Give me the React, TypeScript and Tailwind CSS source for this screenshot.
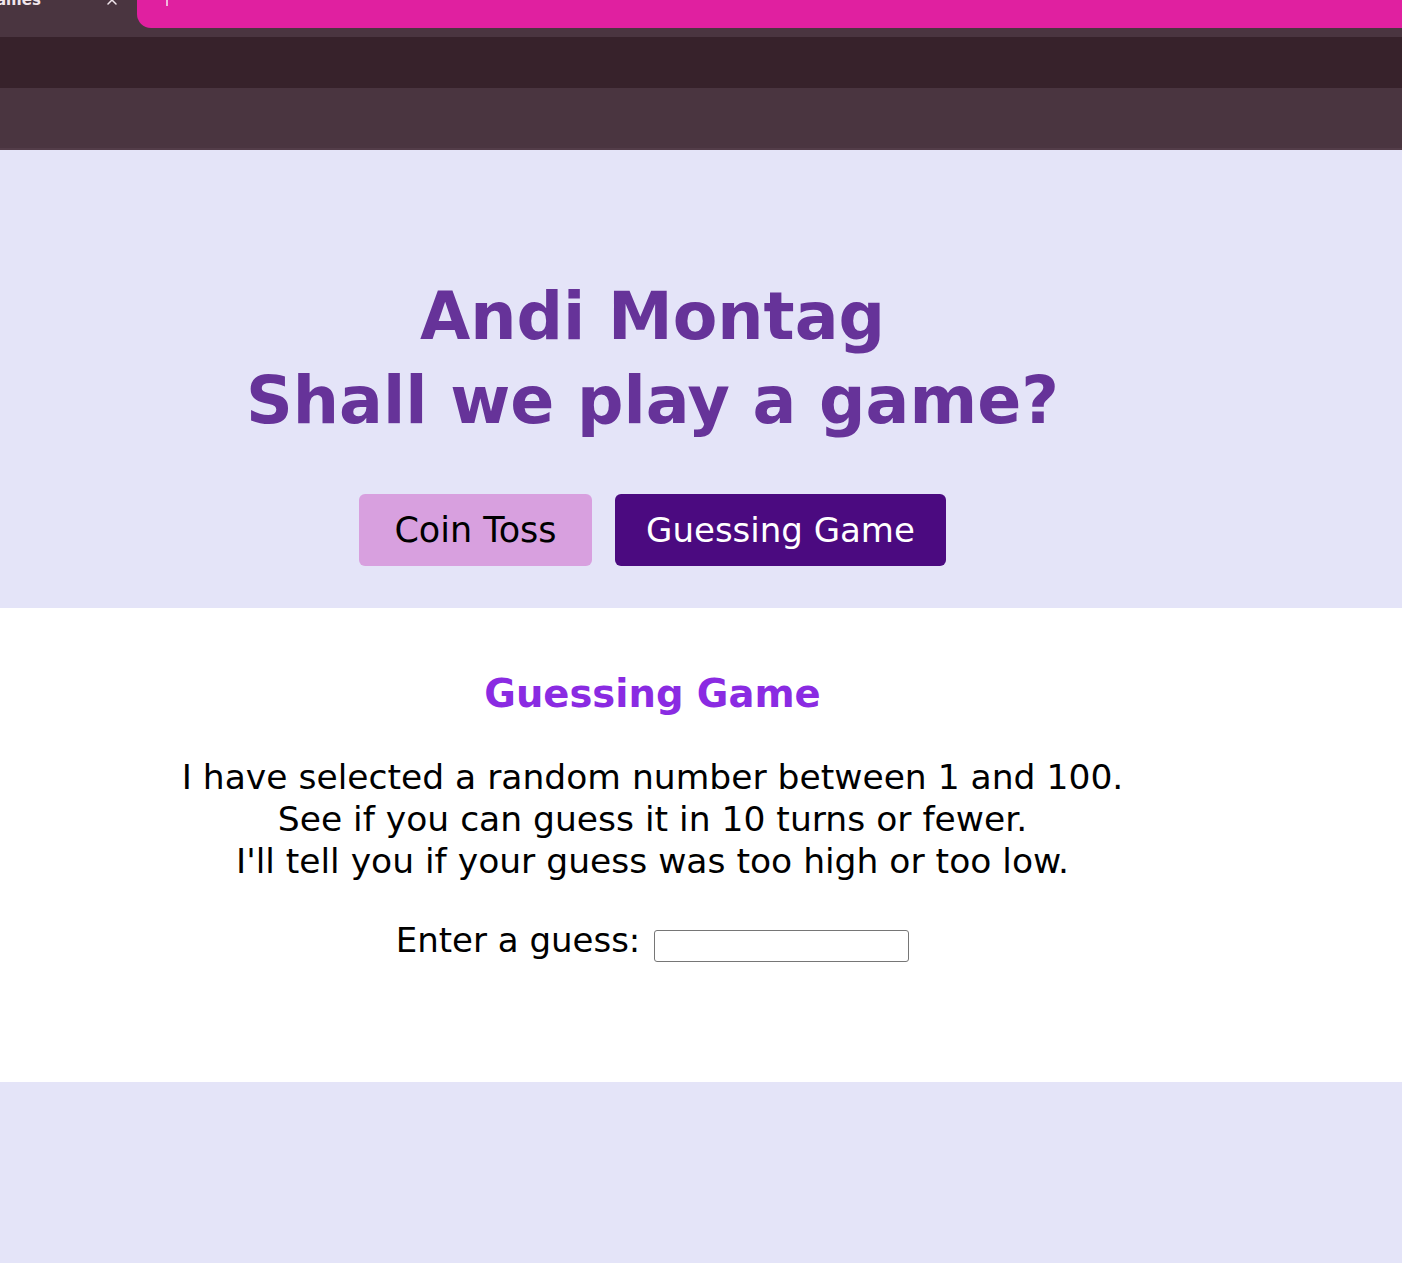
import { X } from "lucide-react";

const font = { fontFamily: '"DejaVu Sans", Verdana, sans-serif' };

const BrowserChrome = () => (
  <div className="bg-[#4a3540]">
    {/* Tab strip */}
    <div className="flex h-[37px] items-start">
      <div className="flex w-[137px] items-start justify-between pr-[17px] text-[15px] font-semibold leading-none text-[#f1e6ec]">
        <span className="-mt-[7px] -ml-[4px]">ames</span>
        <X size={16} strokeWidth={2.2} className="-mt-[8px] text-[#f1e6ec]" />
      </div>
      <div className="flex h-[28px] flex-1 items-start rounded-bl-[14px] bg-[#e020a0] pl-[29px]">
        <div className="h-[6px] w-[2px] bg-[#f0b8dc]" />
      </div>
    </div>
    {/* Toolbar */}
    <div className="h-[51px] bg-[#37222b]" />
    {/* Bookmarks */}
    <div className="h-[62px] border-b-2 border-[#533d49]" />
  </div>
);

export default function App() {
  return (
    <div className="min-h-[1263px] bg-[#e4e4f8]" style={font}>
      <BrowserChrome />

      <header className="pr-[97px] pt-[125px] pb-[42px] text-center">
        <h1 className="text-[65px] font-bold leading-[84px] text-[#663399]">
          Andi Montag
          <br />
          Shall we play a game?
        </h1>
        <div className="mt-[51px] flex justify-center gap-[23px]">
          <button className="h-[72px] w-[233px] rounded-[6px] bg-[#d8a0df] text-[35px] text-black">
            Coin Toss
          </button>
          <button className="h-[72px] w-[331px] rounded-[6px] bg-[#4b0a80] text-[34px] text-white">
            Guessing Game
          </button>
        </div>
      </header>

      <section className="h-[474px] bg-white pr-[97px] pt-[62px] text-center">
        <h2 className="text-[38.5px] font-bold leading-[48px] text-[#8a2be2]">Guessing Game</h2>
        <p className="mt-[38px] text-[34.5px] leading-[42px] text-black">
          I have selected a random number between 1 and 100.
          <br />
          See if you can guess it in 10 turns or fewer.
          <br />
          I'll tell you if your guess was too high or too low.
        </p>
        <div className="mt-[36px] flex items-center justify-center gap-[14px]">
          <label htmlFor="guess" className="text-[34px] leading-[42px] text-black">
            Enter a guess:
          </label>
          <input
            id="guess"
            type="text"
            className="mt-[12px] h-[32px] w-[255px] rounded-[3px] border border-[#767676] bg-white"
          />
        </div>
      </section>
    </div>
  );
}
